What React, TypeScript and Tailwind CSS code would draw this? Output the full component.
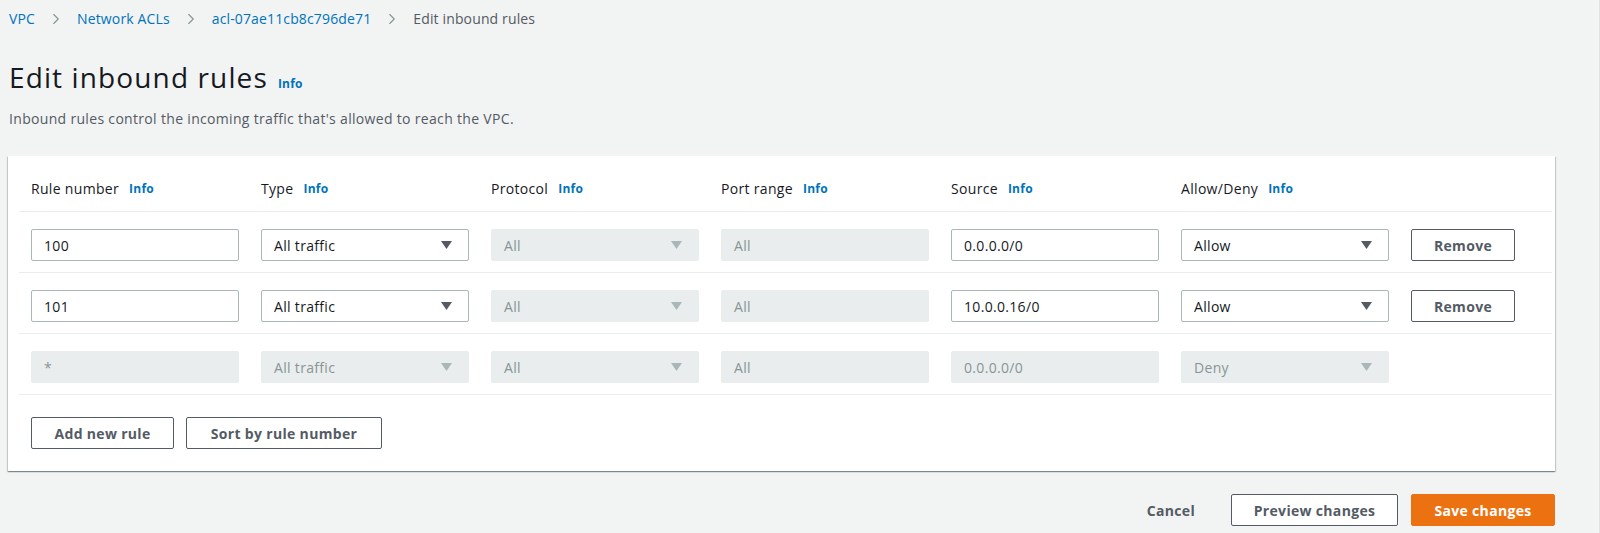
import { ChevronRight } from "lucide-react";

type Rule = {
  num: string;
  type: string;
  protocol: string;
  port: string;
  source: string;
  action: string;
  locked?: boolean;
};

const rules: Rule[] = [
  { num: "100", type: "All traffic", protocol: "All", port: "All", source: "0.0.0.0/0", action: "Allow" },
  { num: "101", type: "All traffic", protocol: "All", port: "All", source: "10.0.0.16/0", action: "Allow" },
  { num: "*", type: "All traffic", protocol: "All", port: "All", source: "0.0.0.0/0", action: "Deny", locked: true },
];

const headers = ["Rule number", "Type", "Protocol", "Port range", "Source", "Allow/Deny"];

function Info({ className = "" }: { className?: string }) {
  return <span className={`text-[12px] font-bold tracking-[0.02em] text-[#0073bb] ${className}`}>Info</span>;
}

function Caret({ disabled }: { disabled?: boolean }) {
  return (
    <svg width="11" height="8" viewBox="0 0 11 8" className="shrink-0">
      <polygon points="0,0 11,0 5.5,8" fill={disabled ? "#aab7b8" : "#545b64"} />
    </svg>
  );
}

function Field({ value, disabled, select }: { value: string; disabled?: boolean; select?: boolean }) {
  return (
    <div
      className={`flex h-[32px] w-[208px] shrink-0 items-center justify-between rounded-[2px] border pl-[12px] pr-[16px] text-[14px] ${
        disabled
          ? "border-[#eaeded] bg-[#eaeded] text-[#879596]"
          : "border-[#aab7b8] bg-white text-[#16191f]"
      }`}
    >
      <span>{value}</span>
      {select && <Caret disabled={disabled} />}
    </div>
  );
}

function Button({ children, className = "" }: { children: React.ReactNode; className?: string }) {
  return (
    <button
      type="button"
      className={`flex h-[32px] items-center justify-center rounded-[2px] border border-[#545b64] bg-white text-[14px] font-bold text-[#545b64] ${className}`}
    >
      {children}
    </button>
  );
}

export default function App() {
  return (
    <div
      className="min-h-[533px] w-[1600px] border-r border-[#dfe2e2] bg-[#f2f3f3] pl-[8px] tracking-[0.02em]"
      style={{ fontFamily: "'Open Sans', 'Noto Sans', sans-serif" }}
    >
      <div className="w-[1547px]">
        <nav className="flex items-center pl-[1px] pt-[9px] text-[14px] leading-[20px] tracking-[0.01em]">
          <span className="text-[#0073bb]">VPC</span>
          <ChevronRight className="mx-[12px] h-[18px] w-[18px] text-[#879596]" strokeWidth={1.5} />
          <span className="text-[#0073bb]">Network ACLs</span>
          <ChevronRight className="mx-[12px] h-[18px] w-[18px] text-[#879596]" strokeWidth={1.5} />
          <span className="text-[#0073bb]">acl-07ae11cb8c796de71</span>
          <ChevronRight className="mx-[12px] h-[18px] w-[18px] text-[#879596]" strokeWidth={1.5} />
          <span className="text-[#545b64]">Edit inbound rules</span>
        </nav>

        <div className="mt-[30px] flex items-baseline pl-[1px]">
          <h1 className="text-[28px] leading-[36px] font-normal tracking-[0.04em] text-[#16191f]">
            Edit inbound rules
          </h1>
          <Info className="ml-[10px]" />
        </div>

        <p className="mt-[14px] pl-[1px] text-[14px] leading-[20px] text-[#545b64]">
          Inbound rules control the incoming traffic that's allowed to reach the VPC.
        </p>

        <div className="mt-[27px] bg-white shadow-[0_1px_1px_0_rgba(0,28,36,0.3),1px_1px_1px_0_rgba(0,28,36,0.15),-1px_1px_1px_0_rgba(0,28,36,0.15)]">
          <div className="ml-[11px] mr-[3px]">
            <div className="flex gap-[22px] pb-[12px] pl-[12px] pt-[23px] text-[14px] leading-[20px] text-[#16191f]">
              {headers.map((h) => (
                <div key={h} className="flex w-[208px] shrink-0 items-center">
                  <span>{h}</span>
                  <Info className="ml-[10px]" />
                </div>
              ))}
            </div>

            {rules.map((r) => (
              <div
                key={r.num}
                className="flex gap-[22px] border-t border-[#eaeded] pb-[11px] pl-[12px] pt-[17px]"
              >
                <Field value={r.num} disabled={r.locked} />
                <Field value={r.type} select disabled={r.locked} />
                <Field value={r.protocol} select disabled />
                <Field value={r.port} disabled />
                <Field value={r.source} disabled={r.locked} />
                <Field value={r.action} select disabled={r.locked} />
                {!r.locked && <Button className="w-[104px]">Remove</Button>}
              </div>
            ))}

            <div className="flex gap-[12px] border-t border-[#eaeded] pb-[22px] pl-[12px] pt-[22px]">
              <Button className="w-[143px]">Add new rule</Button>
              <Button className="w-[196px]">Sort by rule number</Button>
            </div>
          </div>
        </div>

        <div className="mt-[23px] flex items-center justify-end">
          <button type="button" className="h-[32px] px-[20px] text-[14px] font-bold text-[#545b64]">
            Cancel
          </button>
          <Button className="ml-[16px] w-[167px]">Preview changes</Button>
          <button
            type="button"
            className="ml-[13px] flex h-[32px] w-[144px] items-center justify-center rounded-[2px] border border-[#ec7211] bg-[#ec7211] text-[14px] font-bold text-white"
          >
            Save changes
          </button>
        </div>
      </div>
    </div>
  );
}
